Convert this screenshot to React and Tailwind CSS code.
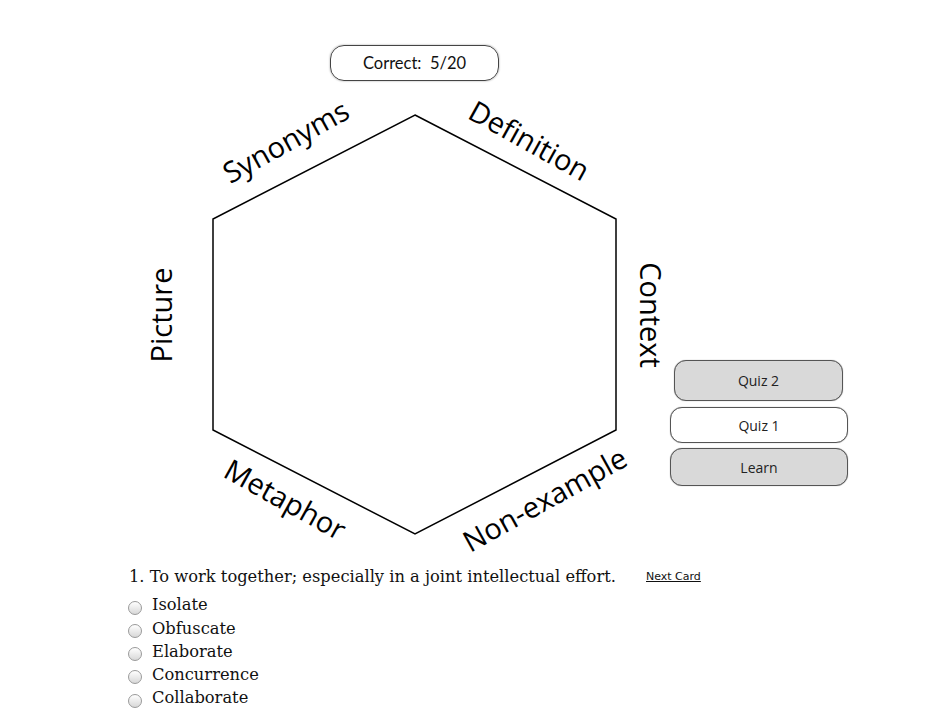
import { useState } from "react";

const options = ["Isolate", "Obfuscate", "Elaborate", "Concurrence", "Collaborate"];

// labels around the hexagon: centre point and rotation
const labels = [
  { text: "Synonyms", x: 286, y: 142, r: -29 },
  { text: "Definition", x: 529, y: 141, r: 29 },
  { text: "Context", x: 650, y: 315, r: 90 },
  { text: "Picture", x: 162, y: 315, r: -90 },
  { text: "Metaphor", x: 285, y: 500, r: 29 },
  { text: "Non-example", x: 545, y: 500, r: -29 },
];

const Hexagon = () => (
  <svg width="670" height="479" viewBox="0 81 670 479" className="shrink-0">
    <polygon
      points="415,115 616,219 616,430 415,534 213,430 213,219"
      fill="none"
      stroke="#000"
      strokeWidth="1.5"
    />
    {labels.map((l) => (
      <text
        key={l.text}
        transform={`translate(${l.x} ${l.y}) rotate(${l.r})`}
        y="10"
        textAnchor="middle"
        fontSize="29"
        fill="#000"
        style={{ fontFamily: '"Open Sans", "DejaVu Sans", sans-serif' }}
      >
        {l.text}
      </text>
    ))}
  </svg>
);

const SideButton = ({ label, active, className }) => (
  <button
    className={
      "rounded-[12px] border border-[#555] text-[14px] text-[#222] font-['Open_Sans',sans-serif] shadow-[0_0_1px_#888] " +
      (active ? "bg-white " : "bg-[#d9d9d9] ") +
      className
    }
  >
    {label}
  </button>
);

export default function App() {
  const [picked, setPicked] = useState(null);

  return (
    <div className="w-[936px] h-[728px] bg-white overflow-hidden text-[#111]">
      <div className="pt-[45px] pl-[330px]">
        <div className="w-[169px] h-[36px] rounded-[14px] border border-[#444] shadow-[0_0_2px_#999] flex items-center justify-center font-['Lato',sans-serif] text-[16.5px] whitespace-pre">
          Correct:  5/20
        </div>
      </div>

      <div className="flex">
        <Hexagon />
        <div className="flex flex-col items-start pt-[279px]">
          <SideButton label="Quiz 2" className="ml-[4px] w-[169px] h-[41px]" />
          <SideButton label="Quiz 1" active className="mt-[6px] w-[178px] h-[36px]" />
          <SideButton label="Learn" className="mt-[5px] w-[178px] h-[38px]" />
        </div>
      </div>

      <div className="pt-[5px] pl-[128px] font-['DejaVu_Serif',serif]">
        <div className="flex items-center h-[24px]">
          <span className="w-[518px] text-[16.3px] pl-[1px] whitespace-nowrap">
            1. To work together; especially in a joint intellectual effort.
          </span>
          <a className="text-[11px] underline text-[#111] font-['DejaVu_Sans',sans-serif] cursor-pointer">
            Next Card
          </a>
        </div>
        <div className="pt-[5px]">
          {options.map((o, i) => (
            <label
              key={o}
              className="flex items-center h-[23.25px] cursor-pointer"
              onClick={() => setPicked(i)}
            >
              <span
                className={
                  "w-[14px] h-[14px] rounded-full border border-[#9a9a9a] bg-gradient-to-b from-white to-[#d8d8d8] mt-[4px] " +
                  (picked === i ? "ring-2 ring-inset ring-[#555]" : "")
                }
              />
              <span className="ml-[10px] text-[16.3px]">{o}</span>
            </label>
          ))}
        </div>
      </div>
    </div>
  );
}
